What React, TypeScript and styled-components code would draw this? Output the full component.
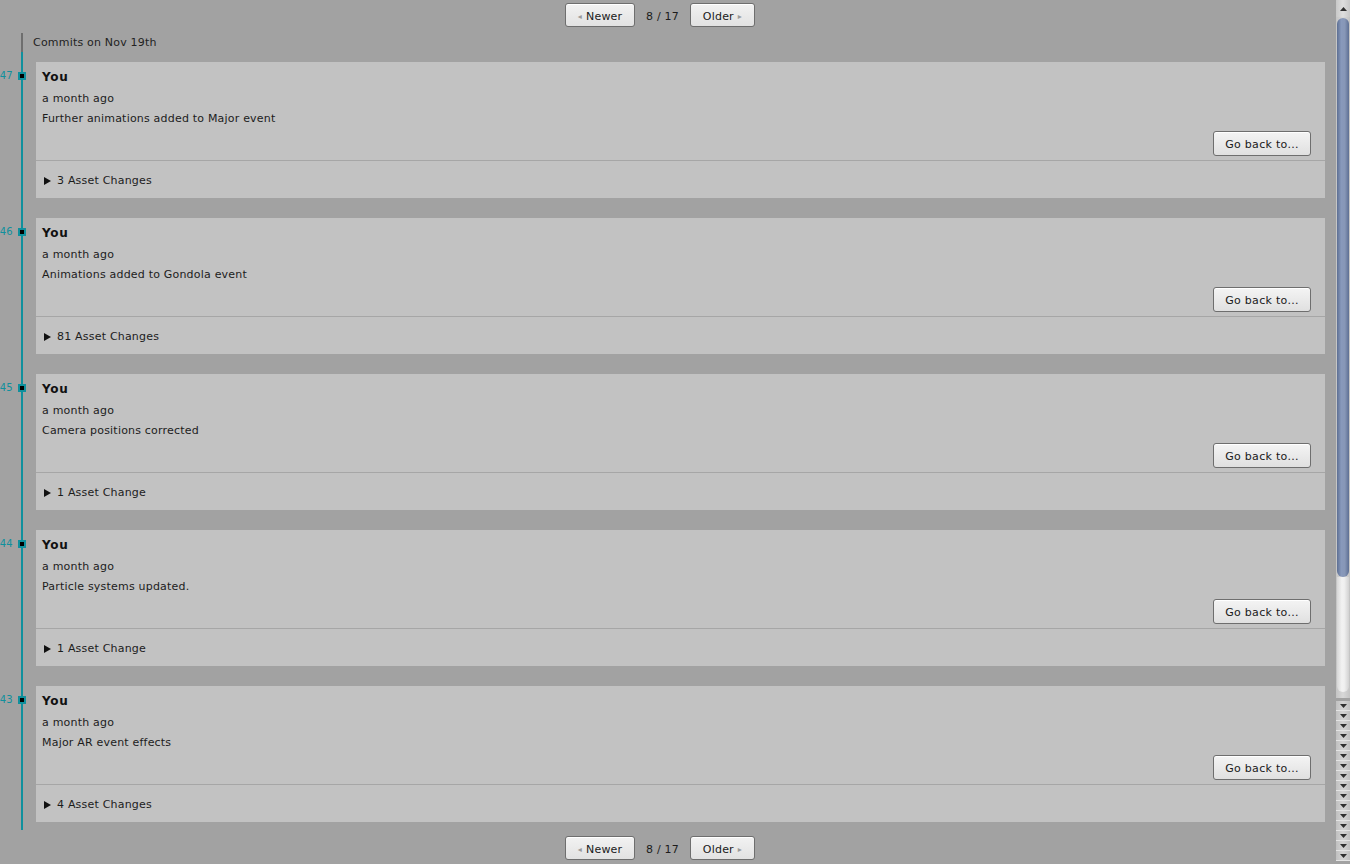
import React from "react";
import styled, { createGlobalStyle } from "styled-components";

interface Commit {
  id: number;
  author: string;
  when: string;
  message: string;
  changes: number;
}

const commits: Commit[] = [
  { id: 47, author: "You", when: "a month ago", message: "Further animations added to Major event", changes: 3 },
  { id: 46, author: "You", when: "a month ago", message: "Animations added to Gondola event", changes: 81 },
  { id: 45, author: "You", when: "a month ago", message: "Camera positions corrected", changes: 1 },
  { id: 44, author: "You", when: "a month ago", message: "Particle systems updated.", changes: 1 },
  { id: 43, author: "You", when: "a month ago", message: "Major AR event effects", changes: 4 },
];

const Pager: React.FC<{ bottom?: boolean }> = ({ bottom }) => (
  <PagerBar $bottom={bottom}>
    <PagerButton $width={70}>
      <Arrow>◂</Arrow>Newer
    </PagerButton>
    <PageCount>8 / 17</PageCount>
    <PagerButton $width={65}>
      Older<Arrow>▸</Arrow>
    </PagerButton>
  </PagerBar>
);

const App: React.FC = () => {
  return (
    <Window>
      <GlobalStyle />
      <Main>
        <Pager />
        <DayHeader>Commits on Nov 19th</DayHeader>
        <CommitList>
          {commits.map((c) => (
            <Card key={c.id}>
              <Marker>
                <MarkerNumber>{c.id}</MarkerNumber>
                <Dot />
              </Marker>
              <CardBody>
                <Author>{c.author}</Author>
                <Meta>{c.when}</Meta>
                <Meta>{c.message}</Meta>
                <ButtonRow>
                  <GoBackButton>Go back to...</GoBackButton>
                </ButtonRow>
              </CardBody>
              <Changes>
                <Triangle />
                {c.changes} Asset {c.changes === 1 ? "Change" : "Changes"}
              </Changes>
            </Card>
          ))}
        </CommitList>
        <Pager bottom />
      </Main>
      <Scrollbar>
        <UpButton>
          <svg width="7" height="4" viewBox="0 0 7 4">
            <path d="M0 4 L3.5 0 L7 4 Z" fill="#303030" />
          </svg>
        </UpButton>
        <Track>
          <Thumb />
          <Rest />
        </Track>
        <DownStack>
          {Array.from({ length: 16 }).map((_, i) => (
            <DownButton key={i}>
              <svg width="7" height="4" viewBox="0 0 7 4">
                <path d="M0 0 L7 0 L3.5 4 Z" fill="#303030" />
              </svg>
            </DownButton>
          ))}
        </DownStack>
      </Scrollbar>
    </Window>
  );
};

export default App;

const GlobalStyle = createGlobalStyle`
  html, body {
    margin: 0;
    padding: 0;
    background: #a2a2a2;
  }
  body {
    font-family: "DejaVu Sans", Verdana, sans-serif;
    font-size: 11px;
    letter-spacing: 0.2px;
    color: #1c1c1c;
  }
`;

const Window = styled.div`
  display: flex;
  width: 1350px;
  height: 864px;
  overflow: hidden;
  background: #a2a2a2;
`;

const Main = styled.div`
  flex: 1;
  display: flex;
  flex-direction: column;
  min-width: 0;
`;

const PagerBar = styled.div<{ $bottom?: boolean }>`
  display: flex;
  justify-content: center;
  align-items: flex-start;
  gap: 10px;
  padding-right: 16px;
  height: ${(p) => (p.$bottom ? "34px" : "33px")};
  padding-top: ${(p) => (p.$bottom ? "6px" : "3px")};
  box-sizing: border-box;
`;

const PagerButton = styled.button<{ $width: number }>`
  width: ${(p) => p.$width}px;
  height: 24px;
  display: flex;
  align-items: center;
  justify-content: center;
  gap: 4px;
  padding: 2px 0 0 0;
  font-family: "DejaVu Sans", Verdana, sans-serif;
  font-size: 11px;
  letter-spacing: 0.2px;
  color: #1a1a1a;
  background: linear-gradient(180deg, #f2f2f2 0%, #e2e2e2 100%);
  border: 1px solid #6e6e6e;
  border-radius: 3px;
  box-shadow: inset 0 1px 0 #ffffff;
`;

const Arrow = styled.span`
  color: #9a9a9a;
  font-size: 8px;
`;

const PageCount = styled.span`
  padding: 2px 1px 0 1px;
  line-height: 24px;
  color: #1c1c1c;
`;

const DayHeader = styled.div`
  margin-left: 21px;
  border-left: 2px solid #6e6e6e;
  height: 19px;
  padding-left: 10px;
  padding-top: 3px;
  box-sizing: border-box;
  line-height: 14px;
  color: #222;
`;

const CommitList = styled.div`
  flex: 1;
  display: flex;
  flex-direction: column;
  gap: 20px;
  margin-left: 21px;
  border-left: 2px solid #10909d;
  padding: 10px 11px 8px 13px;
`;

const Card = styled.div`
  position: relative;
  background: #c2c2c2;
  display: flex;
  flex-direction: column;
`;

const Marker = styled.div`
  position: absolute;
  top: 10px;
  left: -50px;
  width: 40px;
  height: 8px;
  display: flex;
  align-items: center;
  justify-content: flex-end;
  gap: 5px;
`;

const MarkerNumber = styled.span`
  font-size: 10px;
  letter-spacing: 0.3px;
  color: #10909d;
  line-height: 8px;
`;

const Dot = styled.span`
  width: 4px;
  height: 4px;
  background: #000;
  border: 2px solid #10909d;
`;

const CardBody = styled.div`
  height: 99px;
  box-sizing: border-box;
  padding: 7px 14px 0 6px;
  display: flex;
  flex-direction: column;
  border-bottom: 1px solid #a6a6a6;
`;

const Author = styled.div`
  font-weight: bold;
  font-size: 12px;
  letter-spacing: 0.7px;
  line-height: 16px;
  color: #111;
`;

const Meta = styled.div`
  margin-top: 7px;
  line-height: 14px;
  color: #1c1c1c;

  & + & {
    margin-top: 6px;
  }
`;

const ButtonRow = styled.div`
  display: flex;
  justify-content: flex-end;
  margin-top: 5px;
`;

const GoBackButton = styled.button`
  width: 98px;
  height: 25px;
  padding: 1px 0 0 0;
  font-family: "DejaVu Sans", Verdana, sans-serif;
  font-size: 11px;
  letter-spacing: 0.3px;
  color: #1a1a1a;
  background: linear-gradient(180deg, #f4f4f4 0%, #e0e0e0 100%);
  border: 1px solid #6e6e6e;
  border-radius: 3px;
  box-shadow: inset 0 1px 0 #ffffff;
`;

const Changes = styled.div`
  height: 37px;
  box-sizing: border-box;
  padding: 2px 0 0 8px;
  display: flex;
  align-items: center;
  gap: 6px;
  color: #1c1c1c;
`;

const Triangle = styled.span`
  width: 0;
  height: 0;
  border-top: 4.5px solid transparent;
  border-bottom: 4.5px solid transparent;
  border-left: 7px solid #111;
`;

const Scrollbar = styled.div`
  width: 14px;
  display: flex;
  flex-direction: column;
  background: #a2a2a2;
`;

const UpButton = styled.div`
  height: 17px;
  display: flex;
  align-items: center;
  justify-content: center;
  background: linear-gradient(90deg, #c8c8c8, #dedede 50%, #c8c8c8);
`;

const Track = styled.div`
  height: 680px;
  display: flex;
  flex-direction: column;
  padding: 1px 1px 0 1px;
  background: linear-gradient(90deg, #c4c4c4, #d8d8d8 50%, #c4c4c4);
`;

const Thumb = styled.div`
  height: 559px;
  border-radius: 6px;
  background: linear-gradient(90deg, #5d6f93 0%, #8899bb 35%, #8797b7 65%, #5d6f93 100%);
`;

const Rest = styled.div`
  flex: 1;
  margin-bottom: 6px;
  border-radius: 0 0 6px 6px;
  background: linear-gradient(90deg, #d6d6d6 0%, #f2f2f2 40%, #f0f0f0 60%, #d2d2d2 100%);
`;

const DownStack = styled.div`
  flex: 1;
  display: flex;
  flex-direction: column;
  padding-top: 3px;
`;

const DownButton = styled.div`
  height: 9px;
  display: flex;
  align-items: center;
  justify-content: center;
  border-bottom: 1px solid #e4e4e4;
  background: linear-gradient(90deg, #c0c0c0, #d4d4d4 50%, #c0c0c0);
`;
